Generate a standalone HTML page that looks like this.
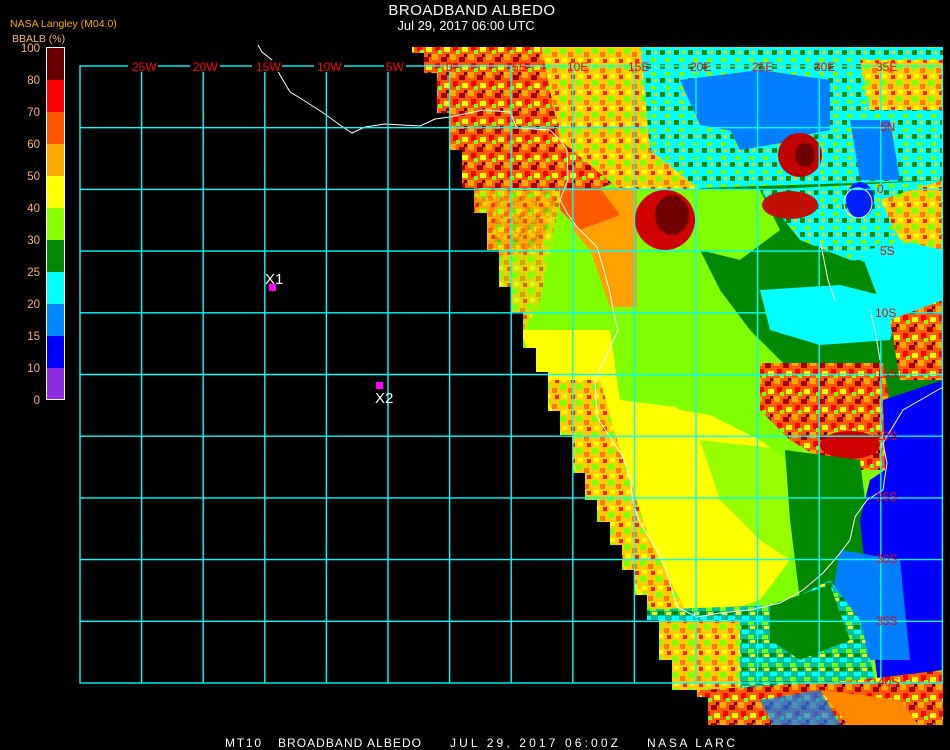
<!DOCTYPE html>
<html><head><meta charset="utf-8"><style>
html,body{margin:0;padding:0;background:#000;width:950px;height:750px;overflow:hidden}
svg{display:block}
text{font-family:"Liberation Sans",sans-serif}
</style></head><body>
<svg width="950" height="750" viewBox="0 0 950 750" xmlns="http://www.w3.org/2000/svg">
<defs>
<pattern id="hot" width="18" height="18" patternUnits="userSpaceOnUse">
<rect width="18" height="18" fill="#ff5a00"/>
<rect x="0" y="0" width="6" height="6" fill="#ffaa00"/>
<rect x="9" y="3" width="6" height="5" fill="#a00000"/>
<rect x="3" y="9" width="5" height="6" fill="#ff0000"/>
<rect x="12" y="11" width="6" height="5" fill="#ffff00"/>
<rect x="6" y="14" width="4" height="4" fill="#80ff00"/>
<rect x="14" y="0" width="3" height="3" fill="#660000"/>
</pattern>
<pattern id="warm" width="16" height="16" patternUnits="userSpaceOnUse">
<rect width="16" height="16" fill="#ffcc00"/>
<rect x="0" y="0" width="6" height="6" fill="#80ff00"/>
<rect x="8" y="4" width="5" height="5" fill="#ff7700"/>
<rect x="2" y="10" width="5" height="4" fill="#ffff00"/>
<rect x="11" y="11" width="4" height="4" fill="#ff2200"/>
</pattern>
<pattern id="grn" width="14" height="14" patternUnits="userSpaceOnUse">
<rect width="14" height="14" fill="#00ffff"/>
<rect x="7" y="2" width="5" height="4" fill="#80ff00"/>
<rect x="2" y="8" width="5" height="5" fill="#008800"/>
<rect x="10" y="9" width="3" height="3" fill="#ffcc00"/>
</pattern>
<pattern id="sw" width="14" height="14" patternUnits="userSpaceOnUse">
<rect width="14" height="14" fill="#00c0a0"/>
<rect x="0" y="0" width="7" height="4" fill="#00ffff"/>
<rect x="6" y="5" width="6" height="4" fill="#80ff00"/>
<rect x="0" y="9" width="6" height="4" fill="#008800"/>
<rect x="8" y="10" width="5" height="3" fill="#ffff00"/>
</pattern>
<clipPath id="land"><path d="M412,47 L943,47 L943,725 L708,725 L708,697 L697,697 L697,690 L684,690 L684,690 L672,690 L672,660 L659,660 L659,620 L647,620 L647,595 L635,595 L635,570 L622,570 L622,545 L610,545 L610,522 L597,522 L597,500 L585,500 L585,473 L573,473 L573,435 L560,435 L560,411 L548,411 L548,372 L536,372 L536,348 L523,348 L523,312 L511,312 L511,287 L499,287 L499,250 L487,250 L487,213 L474,213 L474,188 L462,188 L462,150 L450,150 L450,113 L437,113 L437,73 L424,73 L424,53 L412,53 Z"/></clipPath>
</defs>

<g clip-path="url(#land)">
<rect x="400" y="40" width="550" height="700" fill="#80ff00"/>
<path d="M400,40 L700,40 L690,110 L650,170 L600,188 L560,188 L540,250 L480,260 L400,260Z" fill="url(#hot)"/>
<path d="M540,40 L680,40 L700,190 L620,190 L560,140Z" fill="url(#warm)"/>
<path d="M640,40 L943,40 L943,240 L760,260 L700,190 L650,150Z" fill="url(#grn)"/>
<path d="M680,80 L760,70 L830,80 L830,130 L780,140 L700,125Z" fill="#0080ff"/>
<path d="M720,110 L780,100 L800,140 L740,150Z" fill="#0080ff"/>
<path d="M850,120 L890,120 L900,180 L860,180Z" fill="#0080ff"/>
<path d="M860,60 L943,60 L943,110 L870,110Z" fill="url(#warm)"/>
<ellipse cx="800" cy="155" rx="22" ry="22" fill="#c00000"/>
<ellipse cx="805" cy="155" rx="10" ry="12" fill="#700000"/>
<path d="M700,188 L943,180 L943,420 L880,420 L850,400 L790,370 L750,330 L720,290 L700,250Z" fill="#008800"/>
<path d="M700,190 L760,190 L780,230 L740,260 L700,250Z" fill="#80ff00"/>
<path d="M760,190 L943,180 L943,270 L850,260 L800,240Z" fill="url(#grn)"/>
<path d="M760,290 L840,285 L900,300 L890,340 L820,345 L770,330Z" fill="#00ffff"/>
<path d="M860,250 L943,240 L943,340 L890,330Z" fill="#00ffff"/>
<path d="M890,320 L943,300 L943,380 L900,380Z" fill="url(#hot)"/>
<ellipse cx="860" cy="200" rx="14" ry="18" fill="#0020ff"/>
<ellipse cx="790" cy="205" rx="28" ry="14" fill="#c01000"/>
<path d="M880,200 L943,180 L943,250 L900,240Z" fill="url(#warm)"/>
<path d="M573,188 L637,188 L637,307 L610,307 L590,250 L573,230Z" fill="#ffa000"/>
<path d="M560,188 L600,188 L620,215 L580,230 L560,210Z" fill="#ff5a00"/>
<ellipse cx="665" cy="220" rx="30" ry="30" fill="#d00000"/>
<ellipse cx="672" cy="215" rx="17" ry="20" fill="#700000"/>
<path d="M474,188 L560,188 L560,200 L540,300 L520,340 L480,340Z" fill="url(#warm)" opacity="0.7"/>
<path d="M520,330 L610,330 L620,400 L700,410 L760,440 L800,470 L790,560 L760,600 L700,620 L640,600 L600,520 L560,440Z" fill="#ffff00"/>
<path d="M640,330 L720,330 L760,380 L740,420 L680,410 L640,380Z" fill="#80ff00"/>
<path d="M700,440 L790,450 L800,520 L790,560 L760,540 L720,500Z" fill="#80ff00" opacity="0.8"/>
<path d="M540,380 L600,380 L620,450 L650,540 L690,620 L660,620 L620,560 L580,480Z" fill="url(#warm)"/>
<path d="M760,363 L883,363 L900,470 L840,470 L790,440 L760,410Z" fill="url(#hot)"/>
<ellipse cx="850" cy="445" rx="30" ry="14" fill="#d00000"/>
<path d="M785,450 L860,460 L870,540 L850,580 L800,600 L790,520Z" fill="#008800"/>
<path d="M883,400 L943,380 L943,700 L880,700 L870,620 L860,520 L870,480 L885,470Z" fill="#0000ff"/>
<path d="M840,550 L900,560 L910,660 L860,660 L830,610Z" fill="#0080ff"/>
<path d="M640,610 L780,605 L830,580 L860,620 L880,700 L700,740 L640,700Z" fill="url(#sw)"/>
<path d="M770,605 L830,585 L850,640 L800,660 L770,640Z" fill="#008800"/>
<path d="M640,620 L740,620 L740,700 L700,740 L640,740Z" fill="url(#warm)"/>
<path d="M700,690 L860,680 L943,670 L943,740 L700,740Z" fill="url(#hot)"/>
<path d="M820,690 L900,700 L930,740 L860,740Z" fill="#ff8800"/>
<path d="M760,700 L820,690 L850,740 L780,740Z" fill="#0080ff" opacity="0.7"/>
</g>

<path d="M258,45 L262,52 L272,60 L280,75 L290,92 L300,98 L322,112 L340,125 L352,133 L365,127 L385,124 L420,126 L435,119 L450,117 L483,110 L510,112 L517,128 L550,130 L560,140 L567,150 L568,180 L560,200 L567,213 L577,227 L597,247 L603,267 L610,293 L613,310 L618,330 L603,363 L595,380 L597,417 L610,437 L623,457 L630,477 L633,503 L640,523 L657,550 L663,563 L670,583 L677,607 L697,617 L720,613 L750,610 L780,603 L803,590 L823,573 L837,557 L850,540 L855,517 L867,500 L883,490 L887,463 L883,443 L903,410 L943,387" fill="none" stroke="#fff" stroke-width="1"/>
<path d="M820,240 L828,280 L835,300" fill="none" stroke="#fff" stroke-width="1"/>
<path d="M870,310 L875,330 L880,360" fill="none" stroke="#fff" stroke-width="1"/>
<ellipse cx="858" cy="203" rx="14" ry="15" fill="none" stroke="#fff" stroke-width="1"/>

<g stroke="#00ffff" stroke-width="1.4" fill="none">
<rect x="80" y="66" width="862.4" height="617"/>
<path d="M141.6,66V683M203.2,66V683M264.8,66V683M326.4,66V683M388,66V683M449.6,66V683M511.2,66V683M572.8,66V683M634.4,66V683M696,66V683M757.6,66V683M819.2,66V683M880.8,66V683"/>
<path d="M80,127.7H942M80,189.4H942M80,251.1H942M80,312.8H942M80,374.5H942M80,436.2H942M80,497.9H942M80,559.6H942M80,621.3H942"/>
</g>
<g fill="#000">
<rect x="128" y="60" width="30" height="12"/><rect x="190" y="60" width="30" height="12"/><rect x="252" y="60" width="30" height="12"/><rect x="314" y="60" width="30" height="12"/><rect x="384" y="60" width="22" height="12"/>
</g>
<g fill="#ff0000" font-size="12" font-family="Liberation Mono, monospace">
<text x="132" y="71">25W</text><text x="193" y="71">20W</text><text x="256" y="71">15W</text><text x="317" y="71">10W</text><text x="386" y="71">5W</text><text x="446" y="71">0</text>
<text x="512" y="71">5E</text><text x="567" y="71">10E</text><text x="628" y="71">15E</text><text x="690" y="71">20E</text><text x="752" y="71">25E</text><text x="814" y="71">30E</text><text x="876" y="71">35E</text>
<text x="880" y="131">5N</text><text x="877" y="193">0</text><text x="880" y="255">5S</text><text x="875" y="317">10S</text><text x="876" y="378">15S</text><text x="876" y="440">20S</text><text x="876" y="501">25S</text><text x="876" y="563">30S</text><text x="876" y="625">35S</text><text x="878" y="686">40S</text>
</g>

<rect x="269" y="284" width="7" height="7" fill="#ff00ff"/>
<rect x="376" y="382" width="7" height="7" fill="#ff00ff"/>
<text x="265" y="284" fill="#fff" font-size="15" font-family="Liberation Mono, monospace">X1</text>
<text x="375" y="403" fill="#fff" font-size="15" font-family="Liberation Mono, monospace">X2</text>

<text x="472" y="15" fill="#fff" font-size="15" text-anchor="middle" letter-spacing="0.5">BROADBAND ALBEDO</text>
<text x="466" y="30" fill="#fff" font-size="13" text-anchor="middle">Jul 29, 2017 06:00 UTC</text>
<text x="10" y="27" fill="#ffaa00" font-size="10.5">NASA Langley (M04.0)</text>
<text x="12" y="42" fill="#ffb080" font-size="10.5">BBALB (%)</text>

<g>
<rect x="46" y="47" width="19" height="353" fill="#fff"/>
<rect x="47" y="48" width="17" height="32" fill="#660000"/>
<rect x="47" y="80" width="17" height="32" fill="#ff0000"/>
<rect x="47" y="112" width="17" height="32" fill="#ff5500"/>
<rect x="47" y="144" width="17" height="32" fill="#ffaa00"/>
<rect x="47" y="176" width="17" height="32" fill="#ffff00"/>
<rect x="47" y="208" width="17" height="32" fill="#88ff00"/>
<rect x="47" y="240" width="17" height="32" fill="#008800"/>
<rect x="47" y="272" width="17" height="32" fill="#00ffff"/>
<rect x="47" y="304" width="17" height="32" fill="#0088ff"/>
<rect x="47" y="336" width="17" height="32" fill="#0000ff"/>
<rect x="47" y="368" width="17" height="31" fill="#8a2be2"/>
</g>
<g fill="#ffb080" font-size="11.5" text-anchor="end">
<text x="40" y="52">100</text><text x="40" y="84">80</text><text x="40" y="116">70</text><text x="40" y="148">60</text><text x="40" y="180">50</text><text x="40" y="212">40</text><text x="40" y="244">30</text><text x="40" y="276">25</text><text x="40" y="308">20</text><text x="40" y="340">15</text><text x="40" y="372">10</text><text x="40" y="404">0</text>
</g>

<g fill="#fff" font-size="12" font-family="Liberation Mono, monospace">
<text x="225" y="747" textLength="36">MT10</text>
<text x="278" y="747" textLength="143">BROADBAND ALBEDO</text>
<text x="450" y="747" textLength="168">JUL 29, 2017 06:00Z</text>
<text x="647" y="747" textLength="88">NASA LARC</text>
</g>
</svg>
</body></html>
